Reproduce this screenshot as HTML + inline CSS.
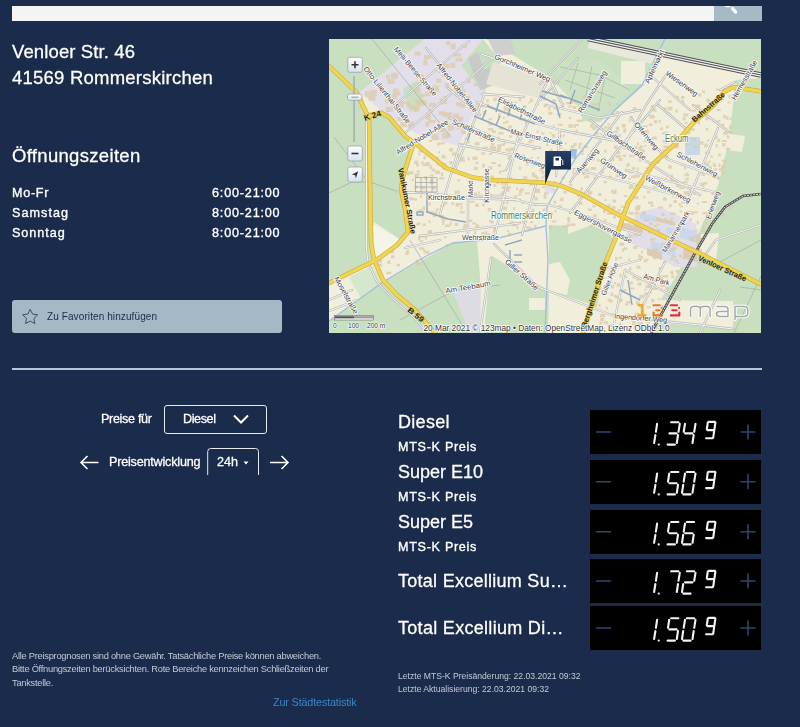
<!DOCTYPE html>
<html><head><meta charset="utf-8">
<style>
html,body{margin:0;padding:0;width:800px;height:727px;overflow:hidden;background:#1b2b4b;}
body{position:relative;font-family:"Liberation Sans",sans-serif;color:#fff;}
.t{position:absolute;white-space:nowrap;will-change:transform;}
.m{-webkit-text-stroke:0.35px currentColor;}
.h{-webkit-text-stroke:0.28px currentColor;}
.pbox{position:absolute;left:590.4px;width:171px;background:#000;}
.s12{font-size:12.6px;line-height:12.6px;}
.s18{font-size:18px;line-height:18px;}
</style></head><body>
<div style="position:absolute;left:11.5px;top:6px;width:702.5px;height:15px;background:#f4f4f4"></div>
<div style="position:absolute;left:714px;top:6px;width:47.5px;height:15px;background:#a5b9c7"></div>
<svg style="position:absolute;left:700px;top:6px" width="62" height="15" viewBox="700 6 62 15"><circle cx="728" cy="2" r="4.6" stroke="#fff" stroke-width="1.6" fill="none"/><path d="M732.6 8.6L735.6 12" stroke="#fff" stroke-width="3.4" stroke-linecap="round"/></svg>

<div class="t h" style="left:12px;top:42.5px;font-size:18.5px;line-height:18.5px;letter-spacing:0.12px">Venloer Str. 46</div>
<div class="t h" style="left:12px;top:69px;font-size:18.5px;line-height:18.5px;letter-spacing:0.23px">41569 Rommerskirchen</div>
<div class="t h" style="left:12px;top:146.5px;font-size:18.5px;line-height:18.5px;letter-spacing:0.32px">Öffnungszeiten</div>

<div class="t m s12" style="left:11.5px;top:186.5px;letter-spacing:0.7px">Mo-Fr</div>
<div class="t m s12" style="left:11.5px;top:206.5px;letter-spacing:1.05px">Samstag</div>
<div class="t m s12" style="left:11.5px;top:226.5px;letter-spacing:0.97px">Sonntag</div>
<div class="t m s12" style="left:212px;top:186.5px;letter-spacing:0.82px">6:00-21:00</div>
<div class="t m s12" style="left:212px;top:206.5px;letter-spacing:0.82px">8:00-21:00</div>
<div class="t m s12" style="left:212px;top:226.5px;letter-spacing:0.82px">8:00-21:00</div>

<div style="position:absolute;left:11.5px;top:300px;width:270px;height:33px;background:#a4b8c6;border-radius:3px"></div>
<svg style="position:absolute;left:0;top:0" width="60" height="340"><path d="M30.20 309.30L32.49 314.04L37.71 314.76L33.91 318.41L34.84 323.59L30.20 321.10L25.56 323.59L26.49 318.41L22.69 314.76L27.91 314.04Z" fill="none" stroke="#33445f" stroke-width="0.9" stroke-linejoin="round"/></svg>
<div class="t" style="left:46.8px;top:311.5px;font-size:10px;line-height:10px;letter-spacing:0.1px;color:#1b2b4b">Zu Favoriten hinzufügen</div>

<div style="position:absolute;left:11.5px;top:368px;width:750px;height:2px;background:#b6c7d5"></div>

<div class="t s12 h" style="left:100.5px;top:413px;letter-spacing:-0.33px">Preise für</div>
<div style="position:absolute;left:164px;top:405px;width:101px;height:26.5px;border:1px solid #e8ecf0;border-radius:3px"></div>
<div class="t s12 h" style="left:182.5px;top:413px;letter-spacing:-0.4px">Diesel</div>
<svg style="position:absolute;left:0;top:380px" width="800" height="120" fill="none" stroke="#fff" stroke-width="1.6">
<path d="M234 35.5L241 42.5L248 35.5" stroke-width="2"/>
<path d="M81 82.5H98.5M87.5 76L81 82.5L87.5 89"/>
<path d="M270 82.5H288M281.5 76L288 82.5L281.5 89"/>
<path d="M207.7 95V71.5Q207.7 68.5 210.7 68.5H255.5Q258.5 68.5 258.5 71.5V95" stroke="#e8ecf0" stroke-width="1"/>
<path d="M243.5 81.5H248.5L246 84.5Z" fill="#fff" stroke="none"/>
</svg>
<div class="t s12 h" style="left:108.5px;top:456px;letter-spacing:-0.2px">Preisentwicklung</div>
<div class="t s12 h" style="left:217px;top:456px">24h</div>

<div class="t h s18" style="left:398px;top:412.5px;letter-spacing:0.3px">Diesel</div>
<div class="t m s12" style="left:398px;top:441px;letter-spacing:0.7px">MTS-K Preis</div>
<div class="t h s18" style="left:398px;top:462.5px">Super E10</div>
<div class="t m s12" style="left:398px;top:491px;letter-spacing:0.7px">MTS-K Preis</div>
<div class="t h s18" style="left:398px;top:513px">Super E5</div>
<div class="t m s12" style="left:398px;top:540.5px;letter-spacing:0.7px">MTS-K Preis</div>
<div class="t h s18" style="left:398px;top:571.5px;letter-spacing:0.27px">Total Excellium Su…</div>
<div class="t h s18" style="left:398px;top:619px;letter-spacing:0.3px">Total Excellium Di…</div>

<div class="pbox" style="top:410px;height:43.6px"></div><div class="pbox" style="top:459.8px;height:43.9px"></div><div class="pbox" style="top:509.8px;height:43.9px"></div><div class="pbox" style="top:559px;height:43.7px"></div><div class="pbox" style="top:606px;height:44.3px"></div>
<svg style="position:absolute;left:0;top:0" width="800" height="727">
<g fill="none" stroke="#2d4870" stroke-width="1.6"><path d="M596 432.0H611M740.5 432.0H755.5M748 424.5V439.5"/><path d="M596 481.8H611M740.5 481.8H755.5M748 474.3V489.3"/><path d="M596 531.8H611M740.5 531.8H755.5M748 524.3V539.3"/><path d="M596 581.0H611M740.5 581.0H755.5M748 573.5V588.5"/><path d="M596 628.0H611M740.5 628.0H755.5M748 620.5V635.5"/></g>
<g fill="none" stroke="#f4f4f4" stroke-width="2.1" stroke-linecap="round"><path d="M657.1 423.8L655.9 431.8M655.4 435.0L654.1 443.0M658.7 444.6L658.8 444.6M671.1 422.2L678.4 422.2M679.8 423.8L678.5 431.8M669.4 433.4L676.6 433.4M678.0 435.0L676.8 443.0M667.6 444.6L674.9 444.6M685.0 423.8L683.7 431.8M685.1 433.4L692.4 433.4M695.5 423.8L694.2 431.8M693.7 435.0L692.5 443.0M708.5 421.9L714.9 421.9M715.4 422.5L714.4 429.5M714.2 430.7L713.2 437.7M706.1 438.3L712.5 438.3M707.8 422.5L706.8 429.5M707.3 430.1L713.7 430.1"/><path d="M657.1 473.6L655.9 481.6M655.4 484.8L654.1 492.8M658.7 494.4L658.8 494.4M671.1 472.0L678.4 472.0M669.2 473.6L668.0 481.6M669.4 483.2L676.6 483.2M678.0 484.8L676.8 492.8M667.6 494.4L674.9 494.4M686.8 472.0L694.1 472.0M695.5 473.6L694.2 481.6M693.7 484.8L692.5 492.8M683.3 494.4L690.6 494.4M683.2 484.8L682.0 492.8M685.0 473.6L683.7 481.6M708.5 471.7L714.9 471.7M715.4 472.3L714.4 479.3M714.2 480.5L713.2 487.5M706.1 488.1L712.5 488.1M707.8 472.3L706.8 479.3M707.3 479.9L713.7 479.9"/><path d="M657.1 523.6L655.9 531.6M655.4 534.8L654.1 542.8M658.7 544.4L658.8 544.4M671.1 522.0L678.4 522.0M669.2 523.6L668.0 531.6M669.4 533.2L676.6 533.2M678.0 534.8L676.8 542.8M667.6 544.4L674.9 544.4M686.8 522.0L694.1 522.0M685.0 523.6L683.7 531.6M685.1 533.2L692.4 533.2M683.2 534.8L682.0 542.8M683.3 544.4L690.6 544.4M693.7 534.8L692.5 542.8M708.5 521.7L714.9 521.7M715.4 522.3L714.4 529.3M714.2 530.5L713.2 537.5M706.1 538.1L712.5 538.1M707.8 522.3L706.8 529.3M707.3 529.9L713.7 529.9"/><path d="M657.1 572.8L655.9 580.8M655.4 584.0L654.1 592.0M658.7 593.6L658.8 593.6M671.1 571.2L678.4 571.2M679.8 572.8L678.5 580.8M678.0 584.0L676.8 592.0M686.8 571.2L694.1 571.2M695.5 572.8L694.2 580.8M685.1 582.4L692.4 582.4M683.2 584.0L682.0 592.0M683.3 593.6L690.6 593.6M708.5 570.9L714.9 570.9M715.4 571.5L714.4 578.5M714.2 579.7L713.2 586.7M706.1 587.3L712.5 587.3M707.8 571.5L706.8 578.5M707.3 579.1L713.7 579.1"/><path d="M657.1 619.8L655.9 627.8M655.4 631.0L654.1 639.0M658.7 640.6L658.8 640.6M671.1 618.2L678.4 618.2M669.2 619.8L668.0 627.8M669.4 629.4L676.6 629.4M678.0 631.0L676.8 639.0M667.6 640.6L674.9 640.6M686.8 618.2L694.1 618.2M695.5 619.8L694.2 627.8M693.7 631.0L692.5 639.0M683.3 640.6L690.6 640.6M683.2 631.0L682.0 639.0M685.0 619.8L683.7 627.8M708.5 617.9L714.9 617.9M715.4 618.5L714.4 625.5M714.2 626.7L713.2 633.7M706.1 634.3L712.5 634.3M707.8 618.5L706.8 625.5M707.3 626.1L713.7 626.1"/></g>
</svg>

<div class="t" style="left:12px;top:649.5px;font-size:9.3px;line-height:13.4px;letter-spacing:-0.26px;color:#c3cad5">Alle Preisprognosen sind ohne Gewähr. Tatsächliche Preise können abweichen.<br>Bitte Öffnungszeiten berücksichten. Rote Bereiche kennzeichen Schließzeiten der<br>Tankstelle.</div>
<div class="t" style="left:273px;top:697px;font-size:10.8px;line-height:11px;letter-spacing:-0.15px;color:#3c86c6">Zur Städtestatistik</div>
<div class="t" style="left:397.5px;top:670px;font-size:8.6px;line-height:12.6px;color:#c3cad5">Letzte MTS-K Preisänderung: 22.03.2021 09:32<br>Letzte Aktualisierung: 22.03.2021 09:32</div>

<svg style="position:absolute;left:329px;top:39px" width="432" height="294" viewBox="329 39 432 294">
<defs><clipPath id="mc"><rect x="329" y="39" width="432" height="294"/></clipPath><linearGradient id="btn" x1="0" y1="0" x2="0" y2="1"><stop offset="0" stop-color="#fdfdfe"/><stop offset="1" stop-color="#d9e2ee"/></linearGradient><linearGradient id="mk" x1="0" y1="0" x2="0" y2="1"><stop offset="0" stop-color="#27406a"/><stop offset="1" stop-color="#0d1a30"/></linearGradient></defs>
<g clip-path="url(#mc)">
<rect x="329" y="39" width="432" height="294" fill="#f1eedc"/>
<path d="M329 39H425L360 92L368 112L384 114L415 143L403 177L401 189L405 209L408 232L401 240L374 222L373 258L329 283Z" fill="#c8dfc0"/>
<path d="M329 333V321L383 282L453 243L477 242L481 288L453 291L470 333Z" fill="#c8dfc0"/>
<path d="M492 256L549 291L548 333H482L489 258Z" fill="#c8dfc0"/>
<path d="M549 225L568 226L568 234L592 225L607 230L614 240L605 264L597 306L549 291Z" fill="#c8dfc0"/>
<path d="M486 39H761V76L657 55L645 84L632 96L600 122L583 121L577 100L550 80L549 77Z" fill="#c8dfc0"/>
<path d="M736 80L761 78V333H650L661 299L675 278L696 240L718 186L729 140Z" fill="#c8dfc0"/>
<path d="M361 298L329 321V283L347 277Z" fill="#c8dfc0"/>
<path d="M349 277L372 266L383 282L361 298Z" fill="#d6e8cc"/>
<path d="M555 62L600 60L632 90L600 118L583 112L560 88Z" fill="#cde2c4"/>
<path d="M560 67L600 75L630 90M565 80L615 98M578 63L570 90M592 66L585 100M606 72L598 112" fill="none" stroke="#a9b0a4" stroke-width="0.7"/>
<path d="M621 61L645 61L645 84L621 84Z" fill="#f1eedc"/>
<path d="M590 39L657 53L652 64L588 48Z" fill="#e9e8dc"/>
<path d="M329 283L347 277L361 298L329 321Z" fill="#f1eedc"/>
<path d="M373 225L401 240L395 248L376 262Z" fill="#f5f4ea"/>
<path d="M650 300L733 301L733 329L650 322Z" fill="#f1eedc"/>
<path d="M701 234L719 233L716 262L699 262Z" fill="#f1eedc"/>
<path d="M729 134L745 136L742 152L727 150Z" fill="#f1eedc"/>
<path d="M482 256L491 256L484 333H476Z" fill="#f1eedc"/>
<path d="M491 244L546 226L549 291Z" fill="#f1eedc"/>
<path d="M529 298L545 298L545 310L529 310Z" fill="#f1eedc"/>
<path d="M549 264L560 262L570 280L567 295L549 291Z" fill="#f1eedc"/>
<path d="M360 92L425 39H483L461 66L484 92L472 117L458 146L415 133L384 113Z" fill="#e2dfea"/>
<path d="M403 89L418 80L425 105L410 112Z" fill="#c8dfc0"/>
<path d="M461 66L483 39L501 62L484 92Z" fill="#c8dfc0"/>
<path d="M468 58L478 52L484 70L474 76Z M474 75L490 67L494 85L480 90Z" fill="#c9c9c9"/>
<path d="M488 39H510L516 54L496 56Z" fill="#cfcfcf"/>
<path d="M493 62L549 80L538 98L486 84Z" fill="#e4e3d4"/>
<path d="M453 291L481 288L480 333H470Z" fill="#dcdce2"/>
<path d="M545 186L554 186L554 193L545 193Z" fill="#e2dfea"/>
<path d="M637 213L660 207L696 224L697 267L675 267L648 251L623 240Z" fill="#e0dee8"/>
<path d="M640 213L656 216L656 222L640 219Z M651 241L675 248L675 257L651 250Z M680 226L697 232L697 243L680 238Z M667 227L680 230L679 236L666 233Z" fill="#c9d8ea"/>
<path d="M656 217L675 222L675 226L656 221Z M621 222L643 228L643 233L621 228Z M647 248L662 253L662 260L647 255Z M684 246L697 250L697 262L683 258Z" fill="#dccbb0"/>
<path d="M685 137L700 137L700 155L685 155Z" fill="#c9d8e8"/>
<path d="M570 149L577 149L576 159L569 158Z" fill="#9dbfe0"/>
<path d="M560.5 146.5h2v2.5h-2ZM600.1 317.6h4v3.5h-4ZM510.1 198.0h4v3h-4ZM636.6 204.9h4v2.5h-4ZM543.5 195.3h3v3.5h-3ZM582.0 172.2h3v2.5h-3ZM672.2 244.5h2.5v2h-2.5ZM577.2 193.4h3v3.5h-3ZM617.7 263.8h4v3h-4ZM475.9 142.0h3.5v3.5h-3.5ZM445.6 243.9h2v2h-2ZM644.9 130.0h4v3.5h-4ZM451.9 152.4h5v3h-5ZM449.3 161.1h3v3.5h-3ZM429.8 181.6h4v2.5h-4ZM510.0 147.6h4v3h-4ZM551.7 220.6h5v2h-5ZM570.6 156.0h3.5v2h-3.5ZM537.0 156.7h2.5v2h-2.5ZM418.8 149.6h5v3h-5ZM536.5 130.7h2.5v2h-2.5ZM652.9 256.7h3.5v2.5h-3.5ZM552.1 99.3h4v3h-4ZM629.8 115.8h3v2.5h-3ZM482.7 104.5h4v3h-4ZM603.9 219.3h2.5v2.5h-2.5ZM682.5 256.5h2.5v2.5h-2.5ZM552.6 143.5h2v2h-2ZM670.3 177.8h2.5v3h-2.5ZM486.5 103.8h2.5v3.5h-2.5ZM598.6 303.7h2v3.5h-2ZM721.8 140.1h5v2h-5ZM516.5 225.9h2v3.5h-2ZM584.2 175.8h5v2.5h-5ZM593.2 214.2h3.5v3h-3.5ZM420.9 186.3h4v3h-4ZM441.0 162.2h2.5v2h-2.5ZM722.1 143.0h3.5v3.5h-3.5ZM664.5 217.9h2.5v2.5h-2.5ZM623.8 195.0h3.5v2h-3.5ZM548.3 111.8h4v3h-4ZM416.5 170.6h3.5v2h-3.5ZM498.5 131.9h5v2.5h-5ZM514.0 101.5h3v2h-3ZM638.4 233.1h2.5v3h-2.5ZM501.0 182.3h5v2.5h-5ZM551.7 138.7h2.5v3h-2.5ZM472.2 222.4h4v2h-4ZM720.3 92.4h2.5v3.5h-2.5ZM696.0 237.7h3v3.5h-3ZM626.3 164.0h2v3h-2ZM701.7 172.4h3v3.5h-3ZM729.3 117.8h2.5v2h-2.5ZM556.6 109.1h2v2.5h-2ZM558.4 99.5h3.5v2.5h-3.5ZM435.1 170.4h5v3.5h-5ZM612.6 199.5h3.5v3h-3.5ZM626.1 327.8h3v2.5h-3ZM688.5 246.8h5v2.5h-5ZM503.8 141.2h2v2.5h-2ZM709.1 165.6h2v2h-2ZM616.4 151.0h4v3h-4ZM486.3 135.7h4v3h-4ZM462.7 143.8h2v3h-2ZM493.9 178.5h4v2.5h-4ZM499.2 127.1h5v2.5h-5ZM640.3 184.3h3v2.5h-3ZM646.0 277.8h2.5v2h-2.5ZM686.0 210.7h5v2.5h-5ZM604.2 321.1h3.5v3.5h-3.5ZM570.3 223.6h5v2.5h-5ZM673.6 259.0h4v2h-4ZM647.3 113.1h2v3h-2ZM428.7 230.1h3.5v3.5h-3.5ZM722.3 123.5h2v2.5h-2ZM460.5 205.9h2v3.5h-2ZM619.3 242.5h5v3.5h-5ZM454.6 190.9h3.5v3.5h-3.5ZM715.1 97.6h2v3.5h-2ZM523.2 118.0h2.5v2.5h-2.5ZM651.9 116.0h3v2.5h-3ZM589.7 224.7h3v2h-3ZM632.8 107.0h3.5v3.5h-3.5ZM541.4 171.5h3v2.5h-3ZM508.8 149.6h2v3h-2ZM718.5 124.2h3v2h-3ZM583.5 145.0h3.5v3h-3.5ZM698.0 121.5h2v3h-2ZM668.2 164.8h2v3.5h-2ZM607.4 123.1h2v2.5h-2ZM648.1 230.9h3.5v2.5h-3.5ZM459.0 202.9h3.5v2h-3.5ZM543.7 103.7h3v3.5h-3ZM513.6 200.0h2.5v2h-2.5ZM404.5 202.4h3v2.5h-3ZM705.1 151.6h5v2.5h-5ZM491.8 138.4h2v3.5h-2ZM601.0 292.7h2.5v2h-2.5ZM501.7 170.1h3v2h-3ZM658.9 275.4h4v3.5h-4ZM623.7 315.8h5v3.5h-5ZM637.9 322.0h5v3h-5ZM557.2 167.6h2v2h-2ZM580.8 153.1h2.5v2h-2.5ZM607.5 298.8h3.5v2.5h-3.5ZM506.9 230.0h2v2h-2ZM427.4 163.8h3v2.5h-3ZM639.3 145.5h3.5v2.5h-3.5ZM543.1 97.9h2.5v2.5h-2.5ZM529.9 116.9h3v2h-3ZM499.0 101.6h4v2.5h-4ZM408.5 171.2h5v3h-5ZM645.5 332.3h2.5v3h-2.5ZM411.4 230.8h4v3.5h-4ZM492.6 148.9h3v3.5h-3ZM684.1 166.1h2v3.5h-2ZM413.5 198.2h3.5v2.5h-3.5ZM534.0 224.7h2.5v3.5h-2.5ZM717.2 138.7h3v3h-3ZM430.0 178.7h3.5v3.5h-3.5ZM586.3 189.5h3.5v2.5h-3.5ZM635.6 170.4h2.5v2.5h-2.5ZM509.1 221.4h5v2.5h-5ZM652.1 288.0h5v2h-5ZM665.9 125.4h3v3h-3ZM711.0 209.0h3v2h-3ZM548.2 107.0h2v3.5h-2ZM703.2 171.0h3v2h-3ZM596.8 103.0h3v3h-3ZM439.1 215.2h5v2.5h-5ZM505.7 148.3h4v3h-4ZM543.1 181.2h3.5v2h-3.5ZM672.8 234.2h2.5v2h-2.5ZM611.1 155.9h3v3.5h-3ZM651.0 298.8h3.5v3.5h-3.5ZM675.6 228.5h3.5v3.5h-3.5ZM718.5 163.6h2v3.5h-2ZM578.6 146.2h2.5v2.5h-2.5ZM605.8 306.5h2v3h-2ZM671.2 275.6h3v2.5h-3ZM723.3 131.5h4v3.5h-4ZM626.3 301.0h5v2.5h-5ZM597.3 219.7h2.5v3.5h-2.5ZM501.7 191.3h3.5v3h-3.5ZM642.1 302.8h2v2h-2ZM617.5 134.3h3.5v3.5h-3.5ZM566.6 223.4h3v3.5h-3ZM497.1 147.0h4v3.5h-4ZM522.0 220.9h3.5v2.5h-3.5ZM679.1 156.7h2v2.5h-2ZM483.9 146.4h3.5v2h-3.5ZM727.4 131.2h5v2h-5ZM681.1 95.9h3.5v3h-3.5ZM400.3 270.8h2.5v2h-2.5ZM688.9 218.5h3v2.5h-3ZM468.9 219.4h3.5v2.5h-3.5ZM536.4 213.0h4v2.5h-4ZM715.8 88.6h3v2h-3ZM524.7 192.3h5v2h-5ZM437.9 196.5h3.5v3h-3.5ZM578.4 144.9h2v3.5h-2ZM428.4 219.9h2v3h-2ZM683.2 113.6h5v3h-5ZM645.7 258.7h2.5v2.5h-2.5ZM454.7 222.9h3.5v3h-3.5ZM427.2 231.0h2v2h-2ZM425.9 210.6h4v2.5h-4ZM417.2 222.4h3.5v2.5h-3.5ZM502.6 116.7h2v2h-2ZM607.6 204.3h3v3.5h-3ZM589.0 191.2h3.5v2.5h-3.5ZM414.2 160.5h4v3.5h-4ZM667.2 249.3h2v3.5h-2ZM524.5 105.4h2v3h-2ZM629.3 287.5h5v2h-5ZM443.9 201.8h3.5v3h-3.5ZM548.2 88.9h2.5v2.5h-2.5ZM628.3 234.6h4v3.5h-4ZM533.0 195.0h2v2h-2ZM575.4 129.5h2.5v3.5h-2.5ZM584.1 145.8h4v2h-4ZM636.3 151.8h2.5v2.5h-2.5ZM653.6 224.9h3.5v2h-3.5ZM386.3 271.8h5v2.5h-5ZM441.8 142.2h3v2h-3ZM638.2 147.2h3v3.5h-3ZM696.8 220.8h2v3.5h-2ZM637.6 282.4h4v3h-4ZM416.3 263.1h2v2h-2ZM629.3 281.6h3.5v3h-3.5ZM650.9 163.1h5v2h-5ZM489.7 128.1h3.5v2.5h-3.5ZM429.9 174.5h4v2h-4ZM479.5 135.0h2.5v3.5h-2.5ZM615.0 257.1h2.5v3.5h-2.5ZM470.1 192.5h2.5v2.5h-2.5ZM645.8 166.9h2.5v2h-2.5ZM418.2 153.2h2v2h-2ZM628.6 186.1h5v3h-5ZM589.8 158.0h5v2.5h-5ZM721.3 165.4h4v3.5h-4ZM694.5 235.4h5v2.5h-5ZM622.6 227.6h3.5v3.5h-3.5ZM464.2 223.7h2v3.5h-2ZM433.7 156.6h5v2.5h-5ZM437.0 163.5h3.5v2h-3.5ZM597.5 159.3h5v2.5h-5ZM715.4 135.4h2v3.5h-2ZM423.1 249.6h2.5v3h-2.5ZM687.1 192.4h3.5v3.5h-3.5ZM419.8 240.2h3.5v2h-3.5ZM644.0 219.5h5v2h-5ZM438.1 151.3h2v2h-2ZM460.1 156.7h4v2.5h-4ZM673.9 95.8h5v2.5h-5ZM616.7 283.2h3.5v3.5h-3.5ZM609.6 268.3h3.5v3h-3.5ZM667.5 106.8h5v3.5h-5ZM626.0 328.0h5v2.5h-5ZM674.1 144.2h5v3h-5ZM467.4 181.6h4v2h-4ZM613.8 145.6h3v3.5h-3ZM612.4 112.5h2v2.5h-2ZM698.0 93.6h3.5v3h-3.5ZM668.1 100.3h3.5v2.5h-3.5ZM604.0 126.3h3.5v2.5h-3.5ZM568.8 116.8h2.5v2.5h-2.5ZM533.4 202.8h3.5v3.5h-3.5ZM629.6 185.3h3v3.5h-3ZM491.0 162.1h5v2h-5ZM421.2 161.2h2.5v3h-2.5ZM542.3 137.1h3v3h-3ZM671.1 136.3h3v3h-3ZM501.3 202.0h3.5v2h-3.5ZM563.9 149.6h2.5v2h-2.5ZM420.8 235.1h3.5v2.5h-3.5ZM668.8 204.3h3v3h-3ZM544.0 192.5h2v3.5h-2ZM496.2 213.0h5v2.5h-5ZM534.4 160.3h2v2h-2ZM607.4 101.4h2.5v2h-2.5ZM618.2 329.1h2v2.5h-2ZM663.4 248.8h2.5v2h-2.5ZM455.6 202.9h3.5v3.5h-3.5ZM618.2 300.7h2v2h-2ZM610.1 279.3h2v3.5h-2ZM487.8 208.0h3.5v3.5h-3.5ZM673.5 145.8h5v2.5h-5ZM601.0 161.9h3.5v3.5h-3.5ZM573.9 125.0h2v3h-2ZM688.7 210.9h2.5v3.5h-2.5ZM496.3 149.6h2.5v3.5h-2.5ZM442.6 163.2h4v2h-4ZM673.4 200.1h3.5v3h-3.5ZM559.9 197.8h3.5v3.5h-3.5ZM415.6 259.6h2.5v3h-2.5ZM530.0 99.7h3v2h-3ZM671.0 174.2h2v3h-2ZM662.6 107.5h4v3h-4ZM711.4 192.4h3.5v2.5h-3.5ZM407.1 245.1h3v3h-3ZM502.9 191.1h2.5v2.5h-2.5ZM478.0 191.7h2v2h-2ZM703.1 182.0h4v2.5h-4ZM660.5 279.7h2.5v3h-2.5ZM693.5 138.6h2.5v3.5h-2.5ZM587.4 155.8h2v2h-2ZM440.1 205.0h5v2h-5ZM498.8 170.8h2.5v3h-2.5ZM439.5 142.5h4v2h-4ZM668.7 247.6h5v3.5h-5ZM655.1 315.2h5v3h-5ZM583.8 168.7h5v2h-5ZM532.4 148.3h3.5v2h-3.5ZM491.0 150.6h3.5v2.5h-3.5ZM714.4 176.6h2.5v2h-2.5ZM487.1 136.6h5v2h-5ZM406.9 171.7h2.5v3.5h-2.5ZM705.2 117.3h3.5v2.5h-3.5ZM691.7 137.3h2.5v3h-2.5ZM541.1 132.5h3.5v2h-3.5ZM728.7 203.6h3v2h-3ZM642.8 125.3h5v2h-5ZM520.0 188.3h4v2.5h-4ZM505.7 120.4h2.5v2.5h-2.5ZM693.3 192.4h2.5v2.5h-2.5ZM543.0 119.5h2.5v2.5h-2.5ZM679.6 210.4h2.5v2h-2.5ZM702.5 183.9h2v3.5h-2ZM705.7 117.3h2.5v3h-2.5ZM483.1 110.9h3v3.5h-3ZM644.8 170.3h2v2.5h-2ZM587.9 208.5h4v2.5h-4ZM542.2 186.2h3v2h-3ZM556.1 155.3h2v3h-2ZM473.8 167.1h4v3h-4ZM436.7 163.1h5v2h-5ZM486.4 195.1h2v3h-2ZM516.1 187.4h2v2.5h-2ZM602.5 276.9h2v2h-2ZM702.9 221.6h5v3h-5ZM519.1 189.4h3v3.5h-3ZM578.4 119.6h5v2h-5ZM648.9 123.4h3.5v2.5h-3.5ZM635.9 174.5h4v3h-4ZM593.7 176.9h3v2h-3ZM550.4 151.7h4v3.5h-4ZM701.3 109.1h4v3h-4ZM541.3 122.7h2.5v3h-2.5ZM567.1 217.1h3v3.5h-3ZM613.1 191.0h3.5v3h-3.5ZM474.6 142.6h5v2.5h-5ZM683.8 191.2h5v3.5h-5ZM445.1 224.4h5v2.5h-5ZM506.3 200.7h2v3.5h-2ZM449.7 221.7h2v3.5h-2ZM696.9 242.6h3v3h-3ZM455.5 153.9h4v3.5h-4ZM651.2 330.0h3.5v3.5h-3.5ZM458.6 196.8h2.5v3.5h-2.5ZM577.6 210.0h2v3h-2ZM417.3 164.4h2v2h-2ZM663.1 197.3h3.5v3.5h-3.5ZM497.3 144.2h4v3h-4ZM505.9 186.3h5v2.5h-5ZM539.3 168.4h4v3h-4ZM627.8 258.5h2v2.5h-2ZM485.7 146.8h2v3h-2ZM712.7 162.7h2.5v3h-2.5ZM681.6 100.1h2.5v3.5h-2.5ZM407.8 224.2h4v2h-4ZM692.8 211.3h5v2h-5ZM414.0 185.4h4v3h-4ZM551.2 81.3h2.5v3.5h-2.5ZM553.0 188.8h2v2h-2ZM540.9 176.5h3.5v2h-3.5ZM424.1 155.4h2v3.5h-2ZM525.8 162.0h3v3.5h-3ZM621.6 237.4h4v2.5h-4ZM507.6 156.2h5v3.5h-5ZM710.2 155.4h3v2h-3ZM474.1 230.5h2v3.5h-2ZM685.8 142.3h2.5v3.5h-2.5ZM616.0 139.4h2.5v2.5h-2.5ZM641.1 149.8h4v2.5h-4ZM457.4 178.9h2.5v2.5h-2.5ZM699.8 237.5h5v3h-5ZM586.5 168.5h3v2.5h-3ZM503.6 189.0h2.5v2h-2.5ZM629.1 267.2h2.5v3h-2.5ZM676.8 262.0h2.5v2h-2.5ZM501.4 143.6h3.5v2.5h-3.5ZM733.7 90.9h3v3h-3ZM633.0 175.0h3.5v3h-3.5ZM592.1 103.4h5v2h-5ZM503.8 217.9h3.5v2.5h-3.5ZM648.0 201.4h5v2.5h-5ZM572.9 105.9h3.5v3h-3.5ZM377.3 263.5h5v3h-5ZM664.7 140.6h2v3.5h-2ZM629.1 154.7h5v2.5h-5ZM648.1 283.0h5v3.5h-5ZM418.0 236.9h2.5v3.5h-2.5ZM632.6 275.9h3v2.5h-3ZM604.4 198.9h2.5v2h-2.5ZM539.1 180.9h5v2.5h-5ZM634.7 211.7h2.5v3h-2.5ZM504.4 99.7h5v3h-5ZM574.9 124.1h4v2h-4ZM651.8 136.5h5v3h-5ZM600.2 314.0h5v3h-5ZM639.5 130.2h4v3h-4ZM492.9 229.3h3v3h-3ZM422.5 163.4h5v2.5h-5ZM604.1 157.0h2v3.5h-2ZM536.1 103.2h3v2h-3ZM689.1 189.3h2.5v3h-2.5ZM636.1 300.8h2v3.5h-2ZM405.2 252.1h3.5v3h-3.5ZM620.7 205.8h3.5v2h-3.5ZM563.5 190.9h3.5v2.5h-3.5ZM592.2 126.3h4v3.5h-4ZM608.7 127.0h3v2h-3ZM695.4 104.4h5v3.5h-5ZM579.2 202.1h3.5v3h-3.5ZM558.0 205.1h3.5v3h-3.5ZM713.5 200.1h2v2.5h-2ZM701.5 113.5h2v2.5h-2ZM558.3 113.0h3.5v2.5h-3.5ZM568.3 105.6h4v2h-4ZM646.8 306.3h4v2h-4ZM696.9 238.8h3.5v2.5h-3.5ZM702.0 200.9h5v2h-5ZM599.7 321.4h4v2h-4ZM411.8 178.7h2v2.5h-2ZM490.3 220.9h3.5v2.5h-3.5ZM632.2 320.0h3.5v3h-3.5ZM482.2 146.9h3v2h-3ZM568.4 124.3h5v3.5h-5ZM690.2 212.0h3v3h-3ZM622.5 154.4h3.5v2.5h-3.5ZM628.3 170.9h2.5v2h-2.5ZM484.9 194.3h3v2.5h-3ZM531.1 208.7h3.5v3h-3.5ZM464.8 137.6h3.5v3h-3.5ZM707.6 217.9h5v2.5h-5ZM576.8 210.8h2.5v2h-2.5ZM513.1 207.1h2v3h-2ZM671.1 272.2h2.5v2.5h-2.5ZM623.3 128.4h3v3h-3ZM548.8 225.8h3v3.5h-3ZM619.2 298.8h3.5v3h-3.5ZM619.0 158.1h3.5v3h-3.5ZM391.1 250.6h3v3h-3ZM460.4 142.9h3.5v3h-3.5ZM640.6 310.1h3.5v3h-3.5ZM717.4 120.1h3v2h-3ZM656.7 223.2h2.5v2h-2.5ZM423.3 156.5h2.5v3h-2.5ZM702.3 229.5h2.5v2.5h-2.5ZM646.0 322.2h4v2h-4ZM707.2 139.3h2.5v2h-2.5ZM410.3 196.9h2v3h-2ZM727.7 101.4h3v2h-3ZM609.3 158.2h5v3h-5ZM611.6 131.2h3.5v3h-3.5ZM419.9 194.7h2v3h-2ZM680.7 163.4h4v2.5h-4ZM613.0 215.9h3v2.5h-3ZM649.1 114.8h5v3.5h-5ZM658.7 267.1h3v3.5h-3ZM570.6 145.2h4v3h-4ZM663.4 145.6h5v2.5h-5ZM440.9 217.2h5v2.5h-5ZM557.3 142.1h5v2.5h-5ZM718.2 153.4h2.5v3h-2.5ZM620.3 142.1h2.5v3.5h-2.5ZM442.3 166.5h2.5v3h-2.5ZM416.8 262.2h5v3h-5ZM422.6 206.4h2.5v3.5h-2.5ZM684.5 122.1h3v2h-3ZM587.2 172.2h4v2h-4ZM710.4 100.7h5v3h-5ZM518.7 166.8h2.5v3h-2.5ZM625.0 275.7h2.5v2h-2.5ZM546.1 142.4h2.5v3.5h-2.5ZM638.5 298.3h2v2.5h-2ZM416.0 223.4h2v2h-2ZM562.5 225.2h4v2h-4ZM525.0 121.9h3v3.5h-3ZM639.1 156.4h3v3.5h-3ZM657.7 298.2h2.5v2h-2.5ZM432.3 186.3h3v3.5h-3ZM638.5 158.3h4v3h-4ZM624.9 169.1h5v3h-5ZM525.8 208.8h3.5v3.5h-3.5ZM549.4 213.1h3.5v2.5h-3.5ZM704.6 143.4h2v3.5h-2ZM613.9 281.9h2v2.5h-2ZM699.5 141.2h4v3.5h-4ZM486.3 99.2h2.5v3h-2.5ZM684.1 174.3h5v2h-5ZM468.1 145.4h3.5v2h-3.5ZM491.1 146.2h5v3h-5ZM629.2 171.1h3.5v2.5h-3.5ZM622.8 146.9h4v2.5h-4ZM598.0 192.9h3.5v3h-3.5ZM406.1 250.1h3v3h-3ZM518.2 193.4h3.5v2h-3.5ZM416.1 163.4h3v3h-3ZM654.3 324.1h3.5v3h-3.5ZM481.2 152.3h4v2.5h-4ZM728.5 95.3h5v3h-5ZM521.5 154.6h3.5v3.5h-3.5ZM631.8 167.2h3.5v2.5h-3.5ZM713.6 168.3h3.5v2.5h-3.5ZM618.6 256.7h3.5v2h-3.5ZM728.9 125.4h3v3.5h-3ZM623.2 248.1h3.5v2h-3.5ZM599.7 133.2h2.5v2h-2.5ZM409.4 197.4h4v3h-4ZM615.8 126.8h3.5v3.5h-3.5ZM623.2 129.2h2.5v3.5h-2.5ZM490.5 175.5h3.5v2.5h-3.5ZM464.8 195.7h3.5v3h-3.5ZM518.7 98.0h2.5v3.5h-2.5ZM640.6 255.7h2.5v3.5h-2.5ZM424.4 250.8h5v3h-5ZM675.4 196.1h2.5v2.5h-2.5ZM664.9 249.3h4v2h-4ZM530.2 98.3h2v2h-2ZM508.1 232.7h3v3.5h-3ZM580.4 132.7h4v2.5h-4ZM566.1 102.1h5v2.5h-5ZM493.1 227.4h2.5v2h-2.5ZM481.0 232.3h2.5v2h-2.5ZM653.2 185.0h2v2.5h-2ZM587.2 198.0h2v2.5h-2ZM523.2 111.7h5v3h-5ZM586.3 174.7h2v2h-2ZM578.7 142.7h3v2.5h-3ZM484.3 233.8h2v3h-2ZM690.5 128.2h3v2h-3ZM562.7 134.3h2.5v2.5h-2.5ZM451.5 202.3h2.5v2.5h-2.5ZM642.9 196.2h2.5v2h-2.5ZM552.8 124.8h2v2h-2ZM615.8 103.0h2.5v2h-2.5ZM549.9 88.1h3v2.5h-3ZM625.4 247.3h2v2h-2ZM671.0 180.0h3.5v3h-3.5ZM599.1 287.6h3.5v2h-3.5ZM610.2 324.6h4v2.5h-4ZM676.0 183.8h5v3.5h-5ZM650.8 283.7h5v2.5h-5ZM667.9 295.0h3v2h-3ZM675.6 259.7h2.5v2.5h-2.5ZM414.5 173.6h2.5v3.5h-2.5ZM615.7 155.1h5v3h-5ZM685.7 158.4h2v2.5h-2ZM610.9 284.9h3v3.5h-3ZM509.9 216.8h3.5v2.5h-3.5ZM596.5 124.9h2v3h-2ZM505.0 197.2h2.5v2h-2.5ZM422.5 223.4h3.5v2.5h-3.5ZM497.3 136.8h2.5v3h-2.5ZM670.6 217.3h2.5v3.5h-2.5ZM437.4 142.6h2v3.5h-2ZM387.3 260.5h3v3.5h-3ZM485.3 233.4h5v3.5h-5ZM491.9 130.5h4v2.5h-4ZM643.9 259.4h2v3h-2ZM721.1 211.7h3.5v3h-3.5ZM441.4 154.8h3.5v3.5h-3.5ZM721.6 171.4h3.5v2.5h-3.5ZM665.4 131.5h2.5v3h-2.5ZM656.1 177.2h4v3.5h-4ZM654.1 120.0h3v3.5h-3ZM557.7 123.8h5v2h-5ZM573.7 143.0h3v3h-3ZM689.5 248.3h3v2.5h-3ZM607.5 323.4h5v2h-5ZM663.6 155.0h5v3h-5ZM501.8 185.9h3v3h-3ZM391.0 255.3h3.5v3h-3.5ZM617.5 208.9h3.5v2.5h-3.5ZM576.8 119.5h5v2.5h-5ZM654.8 186.2h3v2h-3ZM650.0 280.4h5v3.5h-5ZM633.2 245.9h4v3h-4ZM636.6 265.8h4v3h-4ZM462.6 144.8h4v2h-4ZM521.5 202.1h2v2h-2ZM561.4 176.5h3.5v2.5h-3.5ZM428.5 202.6h2.5v3h-2.5ZM547.0 163.6h2v3h-2ZM642.0 211.0h3.5v3.5h-3.5ZM550.2 212.1h2.5v2h-2.5ZM623.9 247.3h3.5v2.5h-3.5ZM503.0 122.1h2.5v2h-2.5ZM646.9 190.8h3.5v2.5h-3.5ZM670.4 257.5h3v2.5h-3ZM641.1 250.5h2v3h-2ZM601.2 116.6h3v2.5h-3ZM573.2 131.8h3v3h-3ZM627.7 162.8h2v3.5h-2ZM662.8 139.8h2.5v3h-2.5ZM664.9 177.6h2v3h-2ZM672.3 179.0h2.5v2h-2.5ZM557.2 112.9h3.5v2.5h-3.5ZM481.8 232.0h2.5v3h-2.5ZM581.9 150.4h2v2h-2ZM713.1 196.0h2v3h-2ZM475.2 203.5h3.5v3.5h-3.5ZM661.2 304.8h2v2.5h-2ZM417.3 143.2h2v2h-2ZM415.4 173.2h4v3.5h-4ZM658.1 206.6h5v2h-5ZM610.6 292.4h2.5v3.5h-2.5ZM628.0 177.7h2.5v2h-2.5ZM721.7 215.1h2v2.5h-2ZM650.9 104.9h5v2h-5ZM530.5 157.2h2.5v2h-2.5ZM726.1 116.3h2.5v3.5h-2.5ZM696.8 202.4h2v2h-2ZM634.0 233.5h4v3h-4ZM570.9 100.3h2.5v3.5h-2.5ZM419.2 247.2h5v2.5h-5ZM619.2 328.1h4v2h-4ZM564.9 142.6h2v2h-2ZM644.4 288.8h2v2h-2ZM487.8 128.0h3v2.5h-3ZM542.5 208.4h3v2.5h-3ZM587.7 191.9h3.5v3.5h-3.5ZM728.1 207.9h2.5v2h-2.5ZM623.1 288.9h3.5v2h-3.5ZM479.5 134.4h2v2.5h-2ZM611.5 313.1h4v3h-4ZM726.8 135.6h2.5v3h-2.5ZM672.3 195.4h2v2h-2ZM685.6 131.2h5v3h-5ZM487.6 197.0h3.5v2.5h-3.5ZM615.6 111.0h3.5v2h-3.5ZM608.8 103.1h2v3h-2ZM497.9 139.5h2v2h-2ZM606.9 212.8h5v2h-5ZM460.0 159.2h5v2.5h-5ZM675.8 236.2h3v2h-3ZM614.8 130.7h3v2.5h-3ZM482.5 198.4h2.5v2.5h-2.5ZM615.5 295.5h2.5v3h-2.5ZM657.7 313.1h2v2.5h-2ZM609.2 299.7h3.5v3h-3.5ZM488.6 121.9h3.5v3.5h-3.5ZM568.9 183.7h3.5v2h-3.5ZM722.1 164.2h2v2h-2ZM520.8 109.3h3v2h-3ZM650.5 204.5h3.5v2h-3.5ZM549.5 132.0h2v2h-2ZM535.2 176.7h3.5v2.5h-3.5ZM615.4 145.2h2v3.5h-2ZM561.0 107.8h3.5v2.5h-3.5ZM648.8 291.1h3v2.5h-3ZM691.6 128.5h3v2.5h-3ZM535.1 189.4h5v3.5h-5ZM720.4 95.6h3.5v2.5h-3.5ZM635.3 206.2h2.5v2.5h-2.5ZM591.5 114.8h3.5v3.5h-3.5ZM554.6 209.9h2v2.5h-2ZM582.0 172.0h3.5v3h-3.5ZM705.0 162.5h4v3.5h-4ZM611.3 189.8h2v3.5h-2ZM434.3 232.5h4v3h-4ZM716.7 206.7h2.5v3h-2.5ZM607.0 160.1h4v3h-4ZM649.2 222.5h3.5v2.5h-3.5ZM619.4 274.1h2v3.5h-2ZM635.3 229.4h2.5v3.5h-2.5ZM429.6 165.6h2.5v3.5h-2.5ZM651.8 148.0h5v3h-5ZM493.2 184.3h3v2.5h-3ZM531.9 172.5h3v3h-3ZM628.4 237.9h2.5v3.5h-2.5ZM660.2 284.6h5v2.5h-5ZM660.0 127.4h3v2.5h-3ZM683.9 215.7h5v2h-5ZM636.2 329.2h2v2h-2ZM473.9 192.6h3v3h-3ZM509.3 179.8h3v3h-3ZM643.8 139.5h3.5v2.5h-3.5ZM582.2 95.2h5v3.5h-5ZM676.3 271.6h2.5v2h-2.5ZM685.3 177.7h3.5v2.5h-3.5ZM545.6 192.4h3v2h-3ZM594.6 304.1h2.5v3h-2.5ZM529.0 138.6h5v3h-5ZM500.3 192.7h3v2h-3ZM663.6 131.8h3v2h-3ZM639.3 294.8h5v3.5h-5ZM496.2 181.2h3v2.5h-3ZM633.6 196.3h5v3h-5ZM525.9 226.2h3v2.5h-3ZM530.3 221.1h3v2h-3ZM697.2 233.2h3v3.5h-3ZM553.6 81.6h5v2h-5ZM638.3 255.4h2v3h-2ZM589.8 158.5h2.5v2.5h-2.5ZM634.8 145.6h2.5v3.5h-2.5ZM590.0 123.9h3.5v3.5h-3.5ZM638.3 254.8h2.5v2.5h-2.5ZM703.7 189.8h2.5v2h-2.5ZM439.2 176.9h5v2.5h-5ZM695.6 239.7h5v3.5h-5ZM429.1 140.1h3v2h-3ZM682.8 117.2h3v3h-3ZM490.8 142.7h3.5v3h-3.5ZM721.9 159.7h5v2.5h-5ZM681.9 228.4h2v2.5h-2ZM655.1 278.0h3v3h-3ZM650.5 238.0h5v2h-5ZM671.8 286.7h3.5v3h-3.5ZM532.1 174.8h5v2.5h-5ZM644.1 145.1h2v2h-2ZM488.9 219.8h3.5v2h-3.5ZM414.7 174.8h3.5v3h-3.5ZM462.9 224.9h4v3.5h-4ZM466.6 140.4h3v3h-3ZM553.0 181.3h3.5v2h-3.5ZM418.8 145.5h3v2h-3ZM611.9 206.1h3.5v3.5h-3.5ZM454.7 190.5h5v3h-5ZM509.1 135.2h3v2.5h-3ZM590.3 150.1h4v2.5h-4ZM704.2 145.3h2v2.5h-2ZM696.7 249.0h5v2.5h-5ZM512.1 216.0h3v3h-3ZM663.3 275.0h5v2.5h-5ZM652.3 108.7h3v2.5h-3ZM552.2 90.6h4v2.5h-4ZM719.6 98.4h4v2h-4ZM652.7 248.4h5v2.5h-5ZM673.2 238.2h2.5v3h-2.5ZM527.7 226.8h4v3h-4ZM704.5 143.8h3.5v3h-3.5ZM462.9 225.7h3.5v2h-3.5ZM661.1 213.1h3.5v3h-3.5ZM632.0 323.3h3.5v2h-3.5ZM482.0 164.0h3v3.5h-3ZM607.9 175.8h4v2h-4ZM535.0 188.6h5v3.5h-5ZM625.6 223.2h5v3.5h-5ZM670.7 212.5h5v2.5h-5ZM566.3 157.3h2.5v3h-2.5ZM468.6 180.0h3.5v3h-3.5ZM480.1 195.4h3v3.5h-3ZM592.4 205.2h3v2h-3ZM489.0 153.0h3v2h-3ZM640.1 306.6h2.5v2h-2.5ZM511.4 224.1h5v2.5h-5ZM635.0 224.2h2v3.5h-2ZM497.9 113.5h2.5v3.5h-2.5ZM577.7 171.8h2v3h-2ZM614.2 189.3h2.5v2h-2.5ZM724.2 203.9h2.5v3.5h-2.5ZM675.5 270.1h4v2h-4ZM693.8 145.4h5v2.5h-5ZM594.8 132.0h3.5v2.5h-3.5ZM671.2 270.7h2v3h-2ZM442.3 218.6h2.5v3.5h-2.5ZM508.0 125.5h4v3.5h-4ZM590.9 167.0h5v3h-5ZM689.4 127.0h2v3h-2ZM449.1 147.9h4v3.5h-4ZM661.2 242.6h5v3h-5ZM604.1 149.7h2.5v3h-2.5ZM644.0 139.9h4v2.5h-4ZM656.4 228.7h4v3h-4ZM668.5 112.6h2v2.5h-2ZM598.8 323.5h2.5v2h-2.5ZM508.9 177.1h3v2h-3ZM650.7 107.2h3.5v3.5h-3.5ZM727.8 86.2h5v2h-5ZM568.4 158.1h2.5v2.5h-2.5ZM717.3 177.1h3v3h-3ZM661.8 132.4h3.5v2h-3.5ZM635.4 211.4h3.5v2h-3.5ZM654.4 108.8h2v3h-2ZM622.0 248.7h2v3h-2ZM551.7 134.1h3.5v3.5h-3.5ZM714.5 190.2h3.5v3h-3.5ZM513.7 195.2h3.5v2.5h-3.5ZM489.6 146.4h2.5v3h-2.5ZM726.1 147.8h4v2.5h-4ZM543.5 175.2h2v2h-2ZM715.8 144.1h2v3.5h-2ZM583.4 165.2h3.5v2h-3.5ZM425.0 236.0h2v3.5h-2ZM663.4 260.8h3v2h-3ZM512.0 129.7h4v3.5h-4ZM695.1 229.5h2.5v2h-2.5ZM503.7 106.3h2.5v3.5h-2.5ZM440.9 172.4h2.5v3.5h-2.5ZM501.1 97.3h2v3h-2ZM444.0 236.2h2.5v2h-2.5ZM540.0 96.0h5v3.5h-5ZM572.1 170.7h2v3.5h-2ZM670.0 271.4h2v2h-2ZM675.4 109.6h2.5v3h-2.5ZM702.6 226.2h2.5v3h-2.5ZM702.7 211.9h5v2.5h-5ZM482.2 203.4h2.5v3h-2.5ZM600.5 170.1h3v3.5h-3ZM549.7 149.3h3v3h-3ZM682.6 180.9h5v2.5h-5ZM644.0 292.5h5v3h-5ZM484.7 231.3h2.5v3.5h-2.5ZM611.8 237.8h5v3h-5ZM628.6 119.2h2v3h-2ZM618.5 323.2h2.5v3h-2.5ZM672.7 255.7h3.5v2h-3.5ZM488.5 118.3h3.5v2h-3.5ZM636.6 302.2h3.5v3.5h-3.5ZM636.9 142.6h2v2.5h-2ZM713.8 164.6h2.5v2.5h-2.5ZM662.8 149.1h2v2h-2ZM719.0 168.2h3.5v3h-3.5ZM418.4 209.3h4v2.5h-4ZM429.8 211.3h4v3h-4ZM431.5 168.5h3.5v3h-3.5ZM472.4 156.4h5v3.5h-5ZM434.2 211.6h3.5v2h-3.5ZM553.5 200.7h3v3h-3ZM615.6 174.8h4v2.5h-4ZM665.1 286.6h4v3.5h-4ZM652.1 315.0h2v3h-2ZM528.5 101.5h2v2h-2ZM488.4 166.2h4v3.5h-4ZM402.1 189.1h3.5v2h-3.5ZM483.6 137.6h4v3h-4ZM558.8 135.3h3v2h-3ZM475.3 161.7h3v2.5h-3ZM615.2 234.4h3.5v3h-3.5ZM504.3 107.4h5v3.5h-5ZM467.6 157.0h2v3.5h-2ZM679.5 186.5h5v2.5h-5ZM613.5 294.7h3v2.5h-3ZM638.5 254.4h2v2.5h-2ZM689.1 236.5h5v3h-5ZM486.3 170.9h2.5v2h-2.5ZM643.5 117.7h2v2.5h-2ZM685.9 172.5h2.5v2.5h-2.5ZM679.2 254.3h2.5v3h-2.5ZM567.5 219.0h2.5v3.5h-2.5ZM631.1 175.4h3.5v2.5h-3.5ZM549.5 78.2h3v3.5h-3ZM528.4 141.3h3.5v2h-3.5ZM673.3 247.1h3.5v2.5h-3.5ZM396.5 263.7h3.5v2.5h-3.5ZM532.8 188.0h2.5v2.5h-2.5ZM603.6 180.8h3.5v2.5h-3.5ZM705.8 128.0h2.5v2.5h-2.5ZM637.2 167.4h2v2.5h-2ZM507.0 188.8h2.5v3h-2.5ZM408.0 208.8h2.5v2.5h-2.5ZM534.2 197.1h3.5v3.5h-3.5ZM730.7 97.6h2v2h-2ZM561.4 103.0h3v2.5h-3ZM708.4 160.6h2.5v2h-2.5ZM378.4 259.4h3.5v3.5h-3.5ZM656.0 160.1h4v3.5h-4ZM425.7 161.9h4v3.5h-4ZM621.4 211.0h4v3.5h-4ZM624.9 303.4h3.5v2h-3.5ZM602.0 286.9h3.5v2.5h-3.5ZM706.9 166.6h5v2.5h-5ZM553.6 107.1h2v2.5h-2ZM672.7 241.4h2.5v2h-2.5ZM633.5 220.2h5v3.5h-5ZM529.4 182.2h3.5v3.5h-3.5ZM493.2 97.8h3.5v3.5h-3.5ZM706.5 98.7h3.5v3.5h-3.5ZM658.5 120.2h2.5v2.5h-2.5ZM716.7 109.0h4v2h-4ZM459.8 211.3h5v2h-5ZM504.0 187.8h2v3.5h-2ZM681.1 201.5h4v2h-4ZM509.1 113.1h2.5v3h-2.5ZM628.6 211.8h5v3h-5ZM621.7 124.1h4v3.5h-4ZM469.5 200.8h5v2h-5ZM476.1 147.4h3v3h-3ZM639.8 148.9h3.5v3h-3.5ZM586.1 214.9h2.5v3.5h-2.5ZM680.8 218.9h2.5v2.5h-2.5ZM678.8 203.1h2v3h-2ZM702.0 90.6h3v2.5h-3ZM610.1 127.3h2v2.5h-2ZM497.9 163.9h3v3h-3ZM502.8 206.4h4v3.5h-4ZM691.5 109.8h5v2h-5ZM637.9 314.9h3v3h-3ZM714.4 174.0h3v3h-3ZM588.8 328.3h2.5v2.5h-2.5ZM574.4 101.3h3v2h-3ZM555.6 81.2h4v2.5h-4ZM424.0 176.1h3.5v3.5h-3.5ZM432.9 213.5h3.5v3.5h-3.5ZM580.4 187.2h2.5v3.5h-2.5ZM636.2 277.0h5v3.5h-5ZM443.8 156.4h2.5v2h-2.5ZM635.0 207.5h5v3h-5ZM680.0 205.6h3v2h-3ZM634.2 312.8h5v3h-5ZM615.2 314.6h4v3.5h-4ZM523.2 176.3h4v3h-4ZM649.9 238.2h5v2.5h-5ZM475.6 224.3h3.5v3.5h-3.5ZM669.4 165.8h2.5v3h-2.5ZM700.0 183.0h3.5v3h-3.5ZM690.6 211.2h4v3h-4ZM442.0 221.5h2v3.5h-2ZM563.3 149.4h3.5v2h-3.5ZM645.0 274.3h4v2h-4ZM435.9 208.6h3.5v2h-3.5ZM595.3 136.6h4v2.5h-4ZM730.0 205.6h4v2h-4ZM603.1 209.6h2.5v3.5h-2.5ZM635.6 245.2h2.5v2h-2.5ZM722.3 87.4h3v2.5h-3ZM645.5 285.2h5v3h-5ZM676.9 279.9h2v2.5h-2ZM489.1 194.2h3.5v2h-3.5ZM733.5 87.0h2v3.5h-2ZM689.9 239.4h5v2h-5ZM723.3 114.9h2.5v3.5h-2.5ZM438.6 128.1h6v4h-6ZM444.8 112.2h7v5h-7ZM459.9 103.7h5v4h-5ZM436.2 78.8h5v4h-5ZM446.1 41.2h4v4h-4ZM456.5 121.0h6v5h-6ZM455.7 88.9h5v6h-5ZM442.3 132.5h7v6h-7ZM374.5 81.5h5v4h-5ZM432.9 85.6h6v6h-6ZM425.9 113.8h5v6h-5ZM414.2 86.5h5v6h-5ZM397.7 105.6h4v3h-4ZM415.8 99.7h7v5h-7ZM421.3 81.3h5v4h-5ZM423.4 59.4h4v6h-4ZM439.5 98.6h4v6h-4ZM441.8 71.9h5v5h-5ZM456.1 102.1h5v4h-5ZM474.2 107.5h4v6h-4ZM448.0 124.4h6v6h-6ZM418.1 83.0h5v3h-5ZM387.4 79.1h7v5h-7ZM431.5 134.3h7v6h-7ZM368.5 94.5h7v6h-7ZM442.0 100.0h5v4h-5ZM476.5 102.2h7v5h-7ZM391.0 72.7h7v6h-7ZM364.6 92.5h5v3h-5ZM460.8 45.0h6v3h-6ZM456.8 86.3h7v3h-7ZM442.8 112.7h7v4h-7ZM428.6 109.0h5v3h-5ZM365.4 91.1h4v6h-4ZM437.6 68.9h7v4h-7ZM393.1 89.0h5v6h-5ZM454.1 53.4h7v3h-7ZM443.4 96.0h4v5h-4ZM407.6 105.3h6v3h-6ZM413.4 106.7h6v5h-6ZM421.9 100.3h5v5h-5ZM385.8 106.8h7v5h-7ZM408.1 121.4h6v6h-6ZM428.2 119.9h7v3h-7ZM400.4 122.2h6v5h-6ZM442.5 120.8h7v4h-7ZM395.3 91.6h5v4h-5ZM378.2 83.3h6v3h-6ZM406.3 102.0h4v5h-4ZM391.2 94.1h6v6h-6ZM453.0 113.4h6v5h-6ZM450.4 62.8h5v5h-5ZM456.7 124.3h6v5h-6ZM431.7 86.7h6v5h-6ZM425.2 121.8h4v5h-4ZM412.2 105.7h6v4h-6ZM419.0 74.3h5v4h-5ZM469.8 104.1h4v4h-4ZM389.5 96.3h7v5h-7ZM466.7 79.0h4v4h-4ZM442.5 63.7h7v4h-7ZM420.2 93.9h5v3h-5ZM424.1 54.9h7v4h-7ZM397.6 101.3h6v6h-6ZM369.8 90.2h7v4h-7ZM384.8 97.4h4v6h-4ZM456.0 119.2h4v5h-4ZM457.2 116.4h6v5h-6ZM444.9 82.9h4v5h-4ZM459.6 89.5h6v5h-6ZM461.1 127.9h5v6h-5ZM402.7 101.2h5v3h-5ZM447.3 116.8h5v3h-5ZM425.3 91.2h6v5h-6ZM473.6 82.9h6v3h-6ZM393.6 88.4h5v4h-5ZM438.8 111.2h6v4h-6ZM420.4 77.7h4v6h-4ZM450.7 43.5h5v6h-5ZM455.6 57.7h7v4h-7ZM465.5 96.2h5v4h-5ZM371.5 90.1h5v6h-5ZM397.4 117.0h5v4h-5ZM428.8 102.7h7v4h-7ZM385.9 74.8h4v4h-4ZM414.7 51.6h6v4h-6ZM474.2 108.4h6v3h-6Z" fill="#dccbab" opacity="0.8"/>
<g fill="none" stroke="#9dbfe0" stroke-width="1.3"><path d="M329 321L383 282L428 255L453 243L495 239L546 226"/><path d="M598 130L576 158L562 180L547 207L546 226L548 260L545 333"/><path d="M665 39L654 61L642 85L614 111L598 130"/></g>
<g fill="none" stroke="#a9a9a9" stroke-width="0.7"><path d="M372 39L451 137"/><path d="M329 193L352 182L370 182L396 191"/><path d="M334 137L365 178"/><path d="M410 240L467 333"/><path d="M400 320L453 291L500 285"/><path d="M761 240L720 262"/><path d="M761 276L734 333"/><path d="M740 287L761 290"/></g>
<g fill="none" stroke-linecap="round" stroke-linejoin="round">
<g stroke="#b9b9b9" stroke-width="2.3"><path d="M388 111L469 41"/><path d="M405 133L473 75L492 58"/><path d="M426 48L480 115"/><path d="M448 88L473 109"/><path d="M366.5 118V245"/><path d="M397 192L427 193L469 198L520 200"/><path d="M473 196L502 196L532 204L549 205L574 212L617 227L640 234"/><path d="M461 145L512 155L545 166"/><path d="M482 94L524 97"/><path d="M477 102L524 120L560 130L617 141"/><path d="M450 118L500 140L540 148"/><path d="M455 170L485 93"/><path d="M506 170L548 80"/><path d="M495 235L518 137"/><path d="M522 235L536 184"/><path d="M570 182L595 148L622 112"/><path d="M570 213L617 151L660 100"/><path d="M574 169L617 180L680 196"/><path d="M460 144L446 191L440 215"/><path d="M468 196V235"/><path d="M481 54L549 77L563 106"/><path d="M540 100L578 58"/><path d="M631 118L667 159L718 177"/><path d="M626 170L680 184L718 193"/><path d="M590 120L617 141L664 173L700 195"/><path d="M624 146L646 105L668 72"/><path d="M658 105L685 128"/><path d="M693 105L729 132"/><path d="M687 203L718 128"/><path d="M650 75L690 110"/><path d="M494 244L538 287L614 316L700 325L733 329"/><path d="M491 258L480 333"/><path d="M612 333L625 270"/><path d="M625 270L680 300"/><path d="M643 305L665 262"/><path d="M540 84L582 39"/><path d="M547 105L600 118L640 110"/><path d="M420 236L520 223"/><path d="M405 248L440 240"/><path d="M700 262L716 240L761 225"/><path d="M720 290L700 333"/><path d="M366 245L368 262L377 282L392 298L410 314L428 333"/><path d="M329 300L352 290"/><path d="M329 311L357 300"/><path d="M338 279L360 318"/><path d="M560 130L556 176"/><path d="M600 270L640 260"/><path d="M735 82L720 90"/></g>
<g stroke="#f6f6f2" stroke-width="1.0"><path d="M388 111L469 41"/><path d="M405 133L473 75L492 58"/><path d="M426 48L480 115"/><path d="M448 88L473 109"/><path d="M366.5 118V245"/><path d="M397 192L427 193L469 198L520 200"/><path d="M473 196L502 196L532 204L549 205L574 212L617 227L640 234"/><path d="M461 145L512 155L545 166"/><path d="M482 94L524 97"/><path d="M477 102L524 120L560 130L617 141"/><path d="M450 118L500 140L540 148"/><path d="M455 170L485 93"/><path d="M506 170L548 80"/><path d="M495 235L518 137"/><path d="M522 235L536 184"/><path d="M570 182L595 148L622 112"/><path d="M570 213L617 151L660 100"/><path d="M574 169L617 180L680 196"/><path d="M460 144L446 191L440 215"/><path d="M468 196V235"/><path d="M481 54L549 77L563 106"/><path d="M540 100L578 58"/><path d="M631 118L667 159L718 177"/><path d="M626 170L680 184L718 193"/><path d="M590 120L617 141L664 173L700 195"/><path d="M624 146L646 105L668 72"/><path d="M658 105L685 128"/><path d="M693 105L729 132"/><path d="M687 203L718 128"/><path d="M650 75L690 110"/><path d="M494 244L538 287L614 316L700 325L733 329"/><path d="M491 258L480 333"/><path d="M612 333L625 270"/><path d="M625 270L680 300"/><path d="M643 305L665 262"/><path d="M540 84L582 39"/><path d="M547 105L600 118L640 110"/><path d="M420 236L520 223"/><path d="M405 248L440 240"/><path d="M700 262L716 240L761 225"/><path d="M720 290L700 333"/><path d="M366 245L368 262L377 282L392 298L410 314L428 333"/><path d="M329 300L352 290"/><path d="M329 311L357 300"/><path d="M338 279L360 318"/><path d="M560 130L556 176"/><path d="M600 270L640 260"/><path d="M735 82L720 90"/></g>
</g>
<path d="M415.5 177.5H437V192H415.5ZM421 177.5V192M426.5 177.5V192M432 177.5V192M415.5 182.5H437M415.5 187H437" fill="none" stroke="#a8a8a8" stroke-width="0.8"/>
<g fill="none" stroke="#8ea6bf" stroke-width="1.4"><path d="M474 116L510 131L545 140"/><path d="M427 193V212L448 219L466 222"/><path d="M417 212h6v3h-6z"/><path d="M542 91L567 98"/><path d="M487 106L535 124M500 98L496 112M512 102L508 116M524 106L520 120M540 96L556 104L560 118"/><path d="M560 95L600 110M575 90L570 104M588 96L584 110M472 126L468 140"/><path d="M505 245L522 240M510 250V268M514 255h8M514 262h8"/><path d="M620 290L640 300M628 280L632 305"/><path d="M482 120L486 110M496 125L500 116"/></g>
<g fill="none"><path d="M588 38.5L761 75" stroke="#505050" stroke-width="5.6"/><path d="M588 38.5L761 75" stroke="#f2f2f2" stroke-width="3.4"/><path d="M588 38.5L761 75" stroke="#505050" stroke-width="1.2"/><path d="M761 194L743 196L725 207L712 224L694 255L651 333" stroke="#4a4a4a" stroke-width="2.6"/><path d="M761 194L743 196L725 207L712 224L694 255L651 333" stroke="#f0f0f0" stroke-width="0.9" stroke-dasharray="2 1"/></g>
<g fill="none" stroke-linejoin="round" stroke-linecap="round">
<g stroke="#c9aa3c" stroke-width="4.5"><path d="M329 66L356 92L369 118L370 180L371 243L374 260L383 280L397 295L414 309L436 334"/><path d="M368 116L381 112.8L389 117L406 137L415 143L446 168L473 177.5L491 180L545 182.7L560 185.4L582 194.4L614 212.5L625 217.7L669 239L700 253.5L761 284.4"/><path d="M414 142L403 177L401 189L405 209L408 232L397 245L378 259L372 262L329 283"/><path d="M628 203L653 164L676 143L693 123L714 105L724 92L733 87L761 91.4"/><path d="M628 203L623 217L617 235L605 264L583 333"/></g>
<g stroke="#f1d550" stroke-width="3.3"><path d="M329 66L356 92L369 118L370 180L371 243L374 260L383 280L397 295L414 309L436 334"/><path d="M368 116L381 112.8L389 117L406 137L415 143L446 168L473 177.5L491 180L545 182.7L560 185.4L582 194.4L614 212.5L625 217.7L669 239L700 253.5L761 284.4"/><path d="M414 142L403 177L401 189L405 209L408 232L397 245L378 259L372 262L329 283"/><path d="M628 203L653 164L676 143L693 123L714 105L724 92L733 87L761 91.4"/><path d="M628 203L623 217L617 235L605 264L583 333"/></g>
</g>
<g font-family="Liberation Sans, sans-serif">
<text x="393.5" y="49.5" transform="rotate(49.6 393.5 49.5)" font-size="7.4" fill="#383838" stroke="#fff" stroke-width="1.6" paint-order="stroke" stroke-linejoin="round" font-weight="normal" textLength="61.7" lengthAdjust="spacingAndGlyphs">Melli-Beese-Straße</text>
<text x="363.0" y="69.0" transform="rotate(51.3 363.0 69.0)" font-size="7.4" fill="#383838" stroke="#fff" stroke-width="1.6" paint-order="stroke" stroke-linejoin="round" font-weight="normal" textLength="70.4" lengthAdjust="spacingAndGlyphs">Otto-Lilienthal-Straße</text>
<text x="436.0" y="65.5" transform="rotate(51.3 436.0 65.5)" font-size="7.4" fill="#383838" stroke="#fff" stroke-width="1.6" paint-order="stroke" stroke-linejoin="round" font-weight="normal" textLength="60.8" lengthAdjust="spacingAndGlyphs">Alfred-Nobel-Allee</text>
<text x="398.0" y="155.0" transform="rotate(-31.7 398.0 155.0)" font-size="7.4" fill="#383838" stroke="#fff" stroke-width="1.6" paint-order="stroke" stroke-linejoin="round" font-weight="normal" textLength="59.9" lengthAdjust="spacingAndGlyphs">Alfred-Nobel-Allee</text>
<text x="451.5" y="123.5" transform="rotate(24.3 451.5 123.5)" font-size="7.4" fill="#383838" stroke="#fff" stroke-width="1.6" paint-order="stroke" stroke-linejoin="round" font-weight="normal" textLength="46.1" lengthAdjust="spacingAndGlyphs">Schillerstraße</text>
<text x="494.0" y="58.5" transform="rotate(23.1 494.0 58.5)" font-size="7.4" fill="#383838" stroke="#fff" stroke-width="1.6" paint-order="stroke" stroke-linejoin="round" font-weight="normal" textLength="59.8" lengthAdjust="spacingAndGlyphs">Gorchheimer Weg</text>
<text x="497.5" y="101.0" transform="rotate(26.8 497.5 101.0)" font-size="7.4" fill="#383838" stroke="#fff" stroke-width="1.6" paint-order="stroke" stroke-linejoin="round" font-weight="normal" textLength="52.1" lengthAdjust="spacingAndGlyphs">Elisabethstraße</text>
<text x="510.0" y="133.5" transform="rotate(13.5 510.0 133.5)" font-size="7.4" fill="#383838" stroke="#fff" stroke-width="1.6" paint-order="stroke" stroke-linejoin="round" font-weight="normal" textLength="53.5" lengthAdjust="spacingAndGlyphs">Max-Ernst-Straße</text>
<text x="514.0" y="157.5" transform="rotate(20.1 514.0 157.5)" font-size="7.4" fill="#383838" stroke="#fff" stroke-width="1.6" paint-order="stroke" stroke-linejoin="round" font-weight="normal" textLength="32.0" lengthAdjust="spacingAndGlyphs">Rosenweg</text>
<text x="582.0" y="113.5" transform="rotate(-58.6 582.0 113.5)" font-size="7.4" fill="#383838" stroke="#fff" stroke-width="1.6" paint-order="stroke" stroke-linejoin="round" font-weight="normal" textLength="48.0" lengthAdjust="spacingAndGlyphs">Romaricusweg</text>
<text x="649.0" y="84.0" transform="rotate(-64.8 649.0 84.0)" font-size="7.4" fill="#383838" stroke="#fff" stroke-width="1.6" paint-order="stroke" stroke-linejoin="round" font-weight="normal" textLength="36.5" lengthAdjust="spacingAndGlyphs">Apfelmarkt</text>
<text x="665.0" y="74.5" transform="rotate(35.8 665.0 74.5)" font-size="7.4" fill="#383838" stroke="#fff" stroke-width="1.6" paint-order="stroke" stroke-linejoin="round" font-weight="normal" textLength="37.6" lengthAdjust="spacingAndGlyphs">Wiesenweg</text>
<text x="735.5" y="100.5" transform="rotate(-60.3 735.5 100.5)" font-size="7.4" fill="#383838" stroke="#fff" stroke-width="1.6" paint-order="stroke" stroke-linejoin="round" font-weight="normal" textLength="44.3" lengthAdjust="spacingAndGlyphs">Hermesstraße</text>
<text x="606.0" y="134.5" transform="rotate(34.4 606.0 134.5)" font-size="7.4" fill="#383838" stroke="#fff" stroke-width="1.6" paint-order="stroke" stroke-linejoin="round" font-weight="normal" textLength="46.0" lengthAdjust="spacingAndGlyphs">Gillbachstraße</text>
<text x="633.5" y="124.5" transform="rotate(49.8 633.5 124.5)" font-size="7.4" fill="#383838" stroke="#fff" stroke-width="1.6" paint-order="stroke" stroke-linejoin="round" font-weight="normal" textLength="34.1" lengthAdjust="spacingAndGlyphs">Olfenweg</text>
<text x="676.0" y="156.0" transform="rotate(27.7 676.0 156.0)" font-size="7.4" fill="#383838" stroke="#fff" stroke-width="1.6" paint-order="stroke" stroke-linejoin="round" font-weight="normal" textLength="45.2" lengthAdjust="spacingAndGlyphs">Schlehenweg</text>
<text x="644.5" y="179.5" transform="rotate(27.8 644.5 179.5)" font-size="7.4" fill="#383838" stroke="#fff" stroke-width="1.6" paint-order="stroke" stroke-linejoin="round" font-weight="normal" textLength="50.3" lengthAdjust="spacingAndGlyphs">Weißbirkenweg</text>
<text x="579.5" y="173.5" transform="rotate(-49.1 579.5 173.5)" font-size="7.4" fill="#383838" stroke="#fff" stroke-width="1.6" paint-order="stroke" stroke-linejoin="round" font-weight="normal" textLength="29.8" lengthAdjust="spacingAndGlyphs">Auenweg</text>
<text x="599.5" y="161.5" transform="rotate(34.5 599.5 161.5)" font-size="7.4" fill="#383838" stroke="#fff" stroke-width="1.6" paint-order="stroke" stroke-linejoin="round" font-weight="normal" textLength="30.9" lengthAdjust="spacingAndGlyphs">Grünweg</text>
<text x="428.0" y="199.5" transform="rotate(0.0 428.0 199.5)" font-size="7.4" fill="#383838" stroke="#fff" stroke-width="1.6" paint-order="stroke" stroke-linejoin="round" font-weight="normal" textLength="37.0" lengthAdjust="spacingAndGlyphs">Kirchstraße</text>
<text x="473.0" y="197.0" transform="rotate(-90.0 473.0 197.0)" font-size="7.4" fill="#383838" stroke="#fff" stroke-width="1.6" paint-order="stroke" stroke-linejoin="round" font-weight="normal" textLength="16.0" lengthAdjust="spacingAndGlyphs">Markt</text>
<text x="489.0" y="202.7" transform="rotate(-90.0 489.0 202.7)" font-size="7.4" fill="#383838" stroke="#fff" stroke-width="1.6" paint-order="stroke" stroke-linejoin="round" font-weight="normal" textLength="34.2" lengthAdjust="spacingAndGlyphs">Kirchgasse</text>
<text x="573.5" y="214.0" transform="rotate(27.4 573.5 214.0)" font-size="7.4" fill="#383838" stroke="#fff" stroke-width="1.6" paint-order="stroke" stroke-linejoin="round" font-weight="normal" textLength="64.2" lengthAdjust="spacingAndGlyphs">Eggershovergasse</text>
<text x="462.0" y="240.0" transform="rotate(0.0 462.0 240.0)" font-size="7.4" fill="#383838" stroke="#fff" stroke-width="1.6" paint-order="stroke" stroke-linejoin="round" font-weight="normal" textLength="37.0" lengthAdjust="spacingAndGlyphs">Wehrstraße</text>
<text x="334.0" y="278.5" transform="rotate(60.9 334.0 278.5)" font-size="7.4" fill="#383838" stroke="#fff" stroke-width="1.6" paint-order="stroke" stroke-linejoin="round" font-weight="normal" textLength="41.2" lengthAdjust="spacingAndGlyphs">Moselstraße</text>
<text x="446.0" y="293.5" transform="rotate(-10.1 446.0 293.5)" font-size="7.4" fill="#383838" stroke="#fff" stroke-width="1.6" paint-order="stroke" stroke-linejoin="round" font-weight="normal" textLength="45.7" lengthAdjust="spacingAndGlyphs">Am Teebaum</text>
<text x="504.5" y="262.5" transform="rotate(41.6 504.5 262.5)" font-size="7.4" fill="#383838" stroke="#fff" stroke-width="1.6" paint-order="stroke" stroke-linejoin="round" font-weight="normal" textLength="42.1" lengthAdjust="spacingAndGlyphs">Giller Straße</text>
<text x="605.5" y="296.0" transform="rotate(-67.9 605.5 296.0)" font-size="7.4" fill="#383838" stroke="#fff" stroke-width="1.6" paint-order="stroke" stroke-linejoin="round" font-weight="normal" textLength="34.5" lengthAdjust="spacingAndGlyphs">Giller Höhe</text>
<text x="643.0" y="278.5" transform="rotate(15.1 643.0 278.5)" font-size="7.4" fill="#383838" stroke="#fff" stroke-width="1.6" paint-order="stroke" stroke-linejoin="round" font-weight="normal" textLength="26.9" lengthAdjust="spacingAndGlyphs">Am Park</text>
<text x="666.0" y="253.0" transform="rotate(-59.0 666.0 253.0)" font-size="7.4" fill="#383838" stroke="#fff" stroke-width="1.6" paint-order="stroke" stroke-linejoin="round" font-weight="normal" textLength="46.6" lengthAdjust="spacingAndGlyphs">Mariannenpark</text>
<text x="710.5" y="219.5" transform="rotate(-70.6 710.5 219.5)" font-size="7.4" fill="#383838" stroke="#fff" stroke-width="1.6" paint-order="stroke" stroke-linejoin="round" font-weight="normal" textLength="28.6" lengthAdjust="spacingAndGlyphs">Erlenweg</text>
<text x="614.0" y="318.5" transform="rotate(4.3 614.0 318.5)" font-size="7.4" fill="#383838" stroke="#fff" stroke-width="1.6" paint-order="stroke" stroke-linejoin="round" font-weight="normal" textLength="53.2" lengthAdjust="spacingAndGlyphs">Ingendorfer Weg</text>
<text x="398.0" y="168.5" transform="rotate(78.8 398.0 168.5)" font-size="7.6" fill="#2a2200" stroke="#f1d550" stroke-width="0.01" paint-order="stroke" stroke-linejoin="round" font-weight="bold" textLength="66.8" lengthAdjust="spacingAndGlyphs">Vanikumer Straße</text>
<text x="694.5" y="122.5" transform="rotate(-41.1 694.5 122.5)" font-size="7.6" fill="#2a2200" stroke="#f1d550" stroke-width="0.01" paint-order="stroke" stroke-linejoin="round" font-weight="bold" textLength="41.1" lengthAdjust="spacingAndGlyphs">Bahnstraße</text>
<text x="586.0" y="328.0" transform="rotate(-71.7 586.0 328.0)" font-size="7.6" fill="#2a2200" stroke="#f1d550" stroke-width="0.01" paint-order="stroke" stroke-linejoin="round" font-weight="bold" textLength="68.5" lengthAdjust="spacingAndGlyphs">Bergheimer Straße</text>
<text x="697.5" y="260.0" transform="rotate(24.4 697.5 260.0)" font-size="7.6" fill="#2a2200" stroke="#f1d550" stroke-width="0.01" paint-order="stroke" stroke-linejoin="round" font-weight="bold" textLength="52.1" lengthAdjust="spacingAndGlyphs">Venloer Straße</text>
<text x="407.0" y="311.0" transform="rotate(38.4 407.0 311.0)" font-size="7.6" fill="#2a2200" stroke="#f1d550" stroke-width="0.01" paint-order="stroke" stroke-linejoin="round" font-weight="bold" textLength="18.5" lengthAdjust="spacingAndGlyphs">B 59</text>
<text x="365.0" y="121.0" transform="rotate(-18.4 365.0 121.0)" font-size="8" fill="#2a2200" stroke="#f1d550" stroke-width="0.01" paint-order="stroke" stroke-linejoin="round" font-weight="bold" textLength="17.4" lengthAdjust="spacingAndGlyphs">K 24</text>
<text x="665" y="142" font-size="10" fill="#3f7f55" stroke="#fff" stroke-width="1.5" paint-order="stroke" textLength="23.5" lengthAdjust="spacingAndGlyphs">Eckum</text>
<text x="491" y="219" font-size="10.2" fill="#3f7f55" stroke="#fff" stroke-width="1.5" paint-order="stroke" textLength="61" lengthAdjust="spacingAndGlyphs">Rommerskirchen</text>
</g>
<g fill="none" stroke-linecap="round" stroke-linejoin="round"><path d="M690.5 316.6V309Q690.5 306.3 695.5 306.3Q700.3 306.3 700.3 309V316.6M700.3 309Q700.3 306.3 705.2 306.3Q710.1 306.3 710.1 309V316.6" stroke="#fff" stroke-width="3.4"/><path d="M717 306.5H725Q728 306.5 728 309.5V316.5H720Q716.5 316.5 716.5 314Q716.5 311.5 720 311.5H728" stroke="#fff" stroke-width="3.4"/><path d="M735 319.5V306.5H744Q747.8 306.5 747.8 310V313Q747.8 316.5 744 316.5H735" stroke="#fff" stroke-width="3.4"/><path d="M690.5 316.6V309Q690.5 306.3 695.5 306.3Q700.3 306.3 700.3 309V316.6M700.3 309Q700.3 306.3 705.2 306.3Q710.1 306.3 710.1 309V316.6" stroke="#a4a8ad" stroke-width="1.5"/><path d="M717 306.5H725Q728 306.5 728 309.5V316.5H720Q716.5 316.5 716.5 314Q716.5 311.5 720 311.5H728" stroke="#a4a8ad" stroke-width="1.5"/><path d="M735 319.5V306.5H744Q747.8 306.5 747.8 310V313Q747.8 316.5 744 316.5H735" stroke="#a4a8ad" stroke-width="1.5"/><path d="M639 305.3H642.3V315.3M638.8 315.3H645.2" stroke="#f0a830" stroke-width="2.6"/><path d="M653.5 305.3H659.8M661.6 308H661.7M656.2 310.3H659.4M653.6 312.5V315.4H662" stroke="#e8792a" stroke-width="2.1"/><path d="M670.9 305.3H677M679 308H679.1M672.3 310.3H676.6M670.9 315.4H679.3V312.6" stroke="#e03040" stroke-width="2.1"/></g>
<text x="423.5" y="330.8" font-size="8.6" font-family="Liberation Sans, sans-serif" fill="#333" stroke="#fff" stroke-width="1.6" paint-order="stroke" textLength="246" lengthAdjust="spacingAndGlyphs">20 Mar 2021 © 123map • Daten: OpenStreetMap, Lizenz ODbL 1.0</text>
<rect x="334.5" y="315.5" width="39" height="4.5" fill="#fff" stroke="#666" stroke-width="0.6"/><rect x="335" y="316.2" width="19.5" height="2.2" fill="#555"/><rect x="354.5" y="316.2" width="18.5" height="2.2" fill="#999"/><g font-family="Liberation Sans, sans-serif" font-size="6.6" fill="#333" stroke="#fff" stroke-width="1.2" paint-order="stroke"><text x="333" y="328">0</text><text x="348" y="328">100</text><text x="367" y="328">200 m</text></g>
<rect x="353.3" y="76" width="1.6" height="66" fill="#a9aeb3"/>
<rect x="347.8" y="57.3" width="14.5" height="15" rx="2" fill="url(#btn)" stroke="#9aa3ad" stroke-width="0.8"/>
<path d="M351.5 64.8h7M355 61.3v7" stroke="#333" stroke-width="1.6"/>
<rect x="347.5" y="94" width="14.5" height="6.3" rx="2" fill="url(#btn)" stroke="#9aa3ad" stroke-width="0.8"/>
<path d="M351.3 97.2h7" stroke="#888" stroke-width="0.9"/>
<rect x="347.8" y="146" width="14.5" height="15" rx="2" fill="url(#btn)" stroke="#9aa3ad" stroke-width="0.8"/>
<path d="M351.5 153.5h7" stroke="#333" stroke-width="1.6"/>
<rect x="347.8" y="167" width="14.5" height="15" rx="2" fill="url(#btn)" stroke="#9aa3ad" stroke-width="0.8"/>
<path d="M358.2 171.2L352 174.6L355.2 175.2L355.8 178.4Z" fill="#333"/>
<path d="M545.2 151H571V169.4H551L545.2 184.5Z" fill="url(#mk)"/>
<path d="M554.5 156.5h5.5a1 1 0 0 1 1 1v8.5h-7.5v-8.5a1 1 0 0 1 1 -1z" fill="#fff"/><path d="M555.5 158h3.5v2.5h-3.5z" fill="#1b2f52"/><path d="M561 159l1.8 1.5v4.5" fill="none" stroke="#fff" stroke-width="0.9"/>
</g></svg>
</body></html>
